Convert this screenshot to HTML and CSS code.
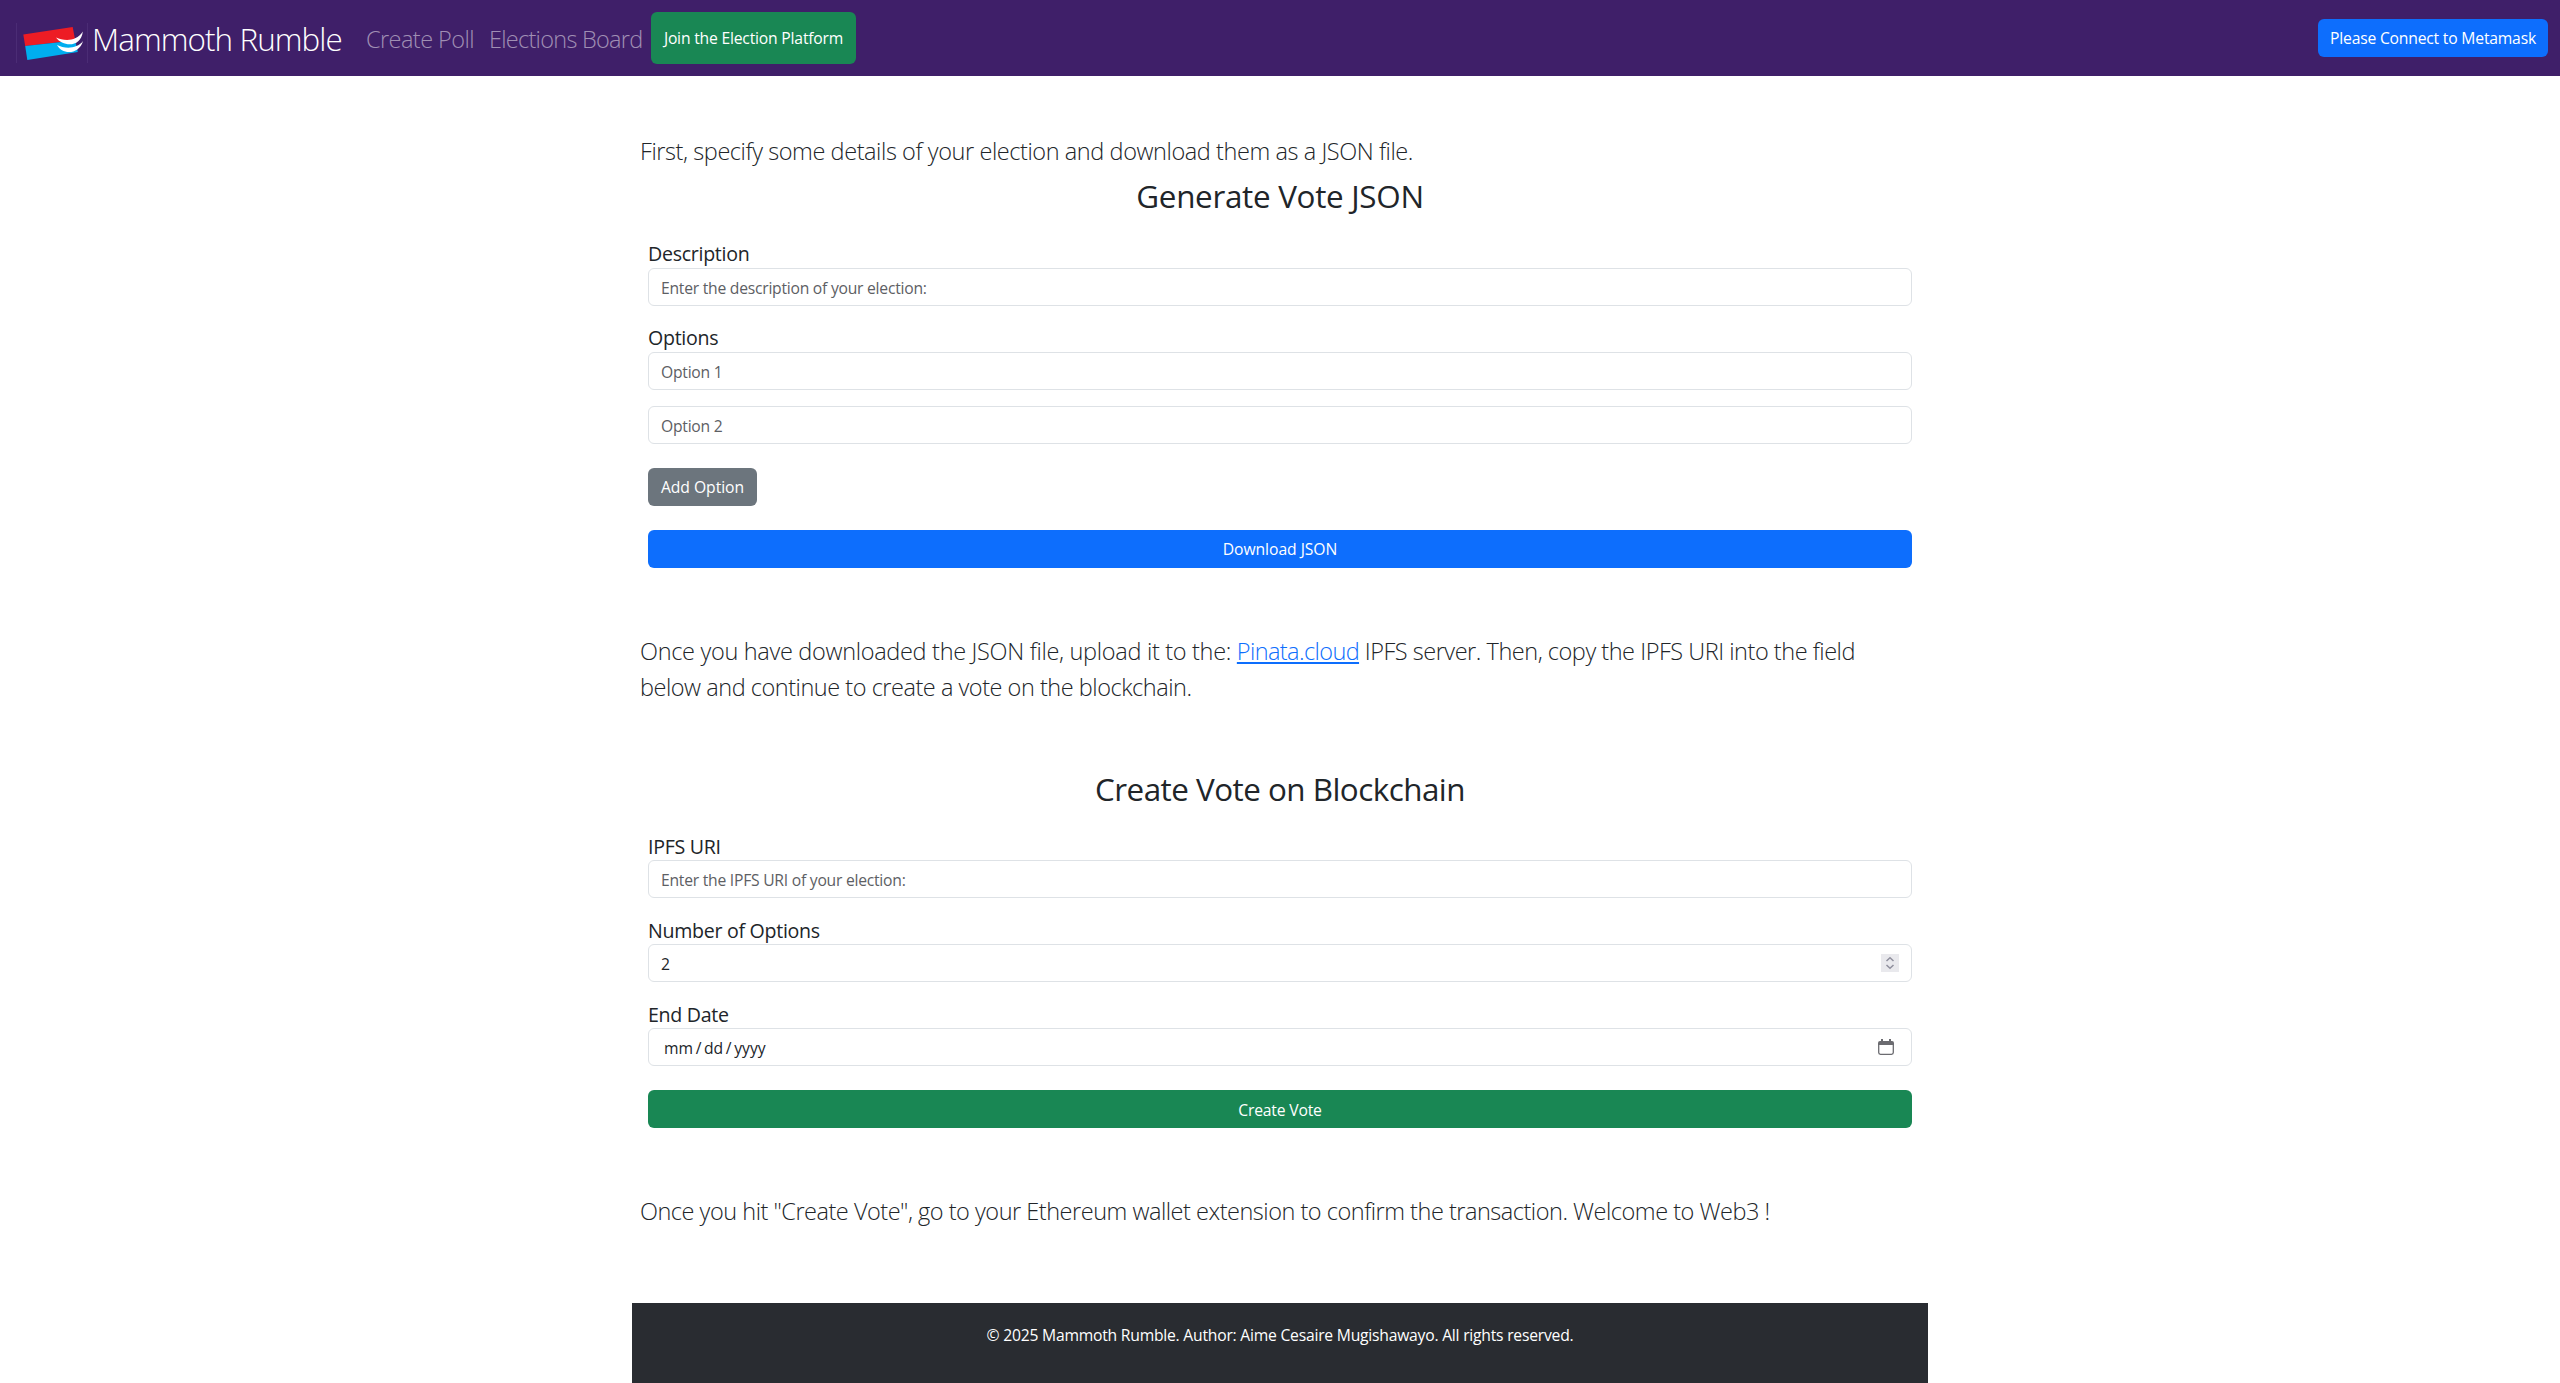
FILE: index.html
```html
<!DOCTYPE html>
<html lang="en">
<head>
<meta charset="utf-8">
<title>Mammoth Rumble</title>
<link rel="stylesheet" href="styles.css">
</head>
<body>
<nav class="navbar">
  <a class="brand"><svg class="logo" width="72" height="40" viewBox="0 0 72 40">
    <path fill="#4b2c75" d="M0 0h1v40H0zM71 0h1v40h-1z"/>
    <path fill="#ed1c24" d="M7.300 11.500 56.700 4 59.200 17.500 9.200 23z"/>
    <path fill="#00aeef" d="M9.200 23 59.200 17.500 61.800 29 11.300 37z"/>
    <path fill="#fff" d="M40 14.500C48 18 60 19 66.800 8.500C65 25 47 24 40 14.500zM41 22C49 26 61 26 67 18C63 32 46 32 41 22z"/>
  </svg><span class="brand-name">Mammoth Rumble</span></a>
  <a class="nav-link poll">Create Poll</a>
  <a class="nav-link board">Elections Board</a>
  <button class="btn join">Join the Election Platform</button>
  <button class="btn connect">Please Connect to Metamask</button>
</nav>
<main class="container">
  <p class="lead intro">First, specify some details of your election and download them as a JSON file.</p>
  <form class="form">
    <h2 class="title generate">Generate Vote JSON</h2>
    <label class="label">Description</label>
    <input class="field" type="text" placeholder="Enter the description of your election:">
    <label class="label next">Options</label>
    <input class="field" type="text" placeholder="Option 1">
    <input class="field extra" type="text" placeholder="Option 2">
    <button class="btn add" type="button">Add Option</button>
    <button class="btn wide download" type="button">Download JSON</button>
  </form>
  <p class="lead upload"><span class="before">Once you have downloaded the JSON file, upload it to the: </span><a class="link">Pinata.cloud</a> IPFS server. Then, copy the IPFS URI into the field<br>below and continue to create a vote on the blockchain.</p>
  <form class="form">
    <h2 class="title create">Create Vote on Blockchain</h2>
    <label class="label low">IPFS URI</label>
    <input class="field" type="text" placeholder="Enter the IPFS URI of your election:">
    <label class="label next low">Number of Options</label>
    <div class="field row"><span>2</span>
      <svg class="spinner" width="18" height="18" viewBox="0 0 18 18"><path fill="#e9e9ed" d="M0 0h18v18H0z"/><path fill="none" stroke="#8f8f9d" stroke-width="1.500" d="M5.500 7 9 3.700 12.500 7M5.500 11 9 14.300 12.500 11"/></svg>
    </div>
    <label class="label next low">End Date</label>
    <div class="field row date"><span>mm&#8201;/&#8201;dd&#8201;/&#8201;yyyy</span>
      <svg class="calendar" width="16" height="16" viewBox="0 0 16 16"><path fill="none" stroke="#6b6b70" stroke-width="1.300" d="M.7 4v9.500q0 1.800 1.800 1.800h11q1.800 0 1.800-1.800V4"/><path fill="#6b6b70" d="M0 6V4q0-2 2-2h1V0h2v2h6V0h2v2h1q2 0 2 2v2z"/></svg>
    </div>
    <button class="btn wide vote" type="button">Create Vote</button>
  </form>
  <p class="lead outro">Once you hit "Create Vote", go to your Ethereum wallet extension to confirm the transaction. Welcome to Web3 !</p>
  <footer class="footer">© 2025 Mammoth Rumble. Author: Aime Cesaire Mugishawayo. All rights reserved.</footer>
</main>
</body>
</html>
```
FILE: styles.css
```css
* { box-sizing: border-box; }
body {
  margin: 0;
  background: #fff;
  color: #212529;
  font: 15.7px/24px "Open Sans", "Noto Sans", sans-serif;
  letter-spacing: -0.22px;
}
.navbar {
  display: flex;
  align-items: center;
  height: 76px;
  padding: 0 12px 0 16px;
  background: #3f1f69;
}
.brand { display: flex; align-items: center; width: 326px; height: 48px; margin-top: 10px; color: #fff; }
.logo { flex: none; }
.brand-name {
  margin: -8px 0 0 4px;
  font-size: 31.4px;
  font-weight: 300;
  line-height: 48px;
  letter-spacing: -0.92px;
  white-space: nowrap;
}
.nav-link {
  padding-top: 2px;
  color: #a08fb4;
  font-size: 23.5px;
  font-weight: 300;
  line-height: 36px;
  white-space: nowrap;
}
.poll { width: 107px; margin-left: 24px; letter-spacing: -0.56px; }
.board { width: 154px; margin-left: 16px; letter-spacing: -0.72px; }
.btn {
  height: 38px;
  padding: 0 12px;
  border: 0;
  border-radius: 6px;
  color: #fff;
  font: inherit;
  letter-spacing: -0.2px;
  white-space: nowrap;
}
.join { width: 205px; height: 52px; margin-left: 8px; background: #198754; }
.connect { width: 230px; margin-left: auto; background: #0d6efd; }
.container { width: 1296px; margin: 0 auto; }
.lead {
  margin: 0;
  padding: 0 8px;
  font-size: 23.5px;
  font-weight: 300;
  line-height: 36px;
  letter-spacing: -0.42px;
  white-space: nowrap;
}
.intro { padding-top: 57px; }
.form { display: flex; flex-direction: column; padding: 0 16px; }
.title { margin: 0; font-size: 31.4px; font-weight: 500; line-height: 38px; text-align: center; }
.generate { padding: 8px 0 23px; letter-spacing: -0.3px; }
.create { padding: 65px 0 22px; letter-spacing: -0.52px; }
.label { height: 30px; font-size: 19.6px; line-height: 32px; letter-spacing: -0.29px; }
.low { line-height: 34px; }
.next { margin-top: 16px; }
.field {
  width: 100%;
  height: 38px;
  padding: 1px 12px 0;
  border: 1px solid #dee2e6;
  border-radius: 6px;
  background: #fff;
  color: #212529;
  font: inherit;
  letter-spacing: -0.25px;
}
.field::placeholder { color: #5d6064; opacity: 1; }
.extra { margin-top: 16px; }
.row { display: flex; align-items: center; justify-content: space-between; padding-top: 2px; }
.spinner, .calendar { margin-top: -2px; }
.date { padding: 2px 17px 0 15px; letter-spacing: 0; }
.add { align-self: flex-start; width: 109px; margin-top: 24px; letter-spacing: -0.05px; background: #6c757d; }
.wide { width: 100%; margin-top: 24px; }
.download { letter-spacing: -0.05px; background: #0d6efd; }
.vote { padding-top: 1px; background: #198754; }
.upload { padding-top: 65px; letter-spacing: -0.47px; }
.before { letter-spacing: -0.31px; }
.link { color: #0d6efd; letter-spacing: -0.6px; text-decoration: underline; }
.outro { padding-top: 65px; letter-spacing: -0.48px; }
.footer {
  height: 80px;
  margin-top: 74px;
  padding-top: 20px;
  background: #292c31;
  color: #fff;
  letter-spacing: -0.23px;
  text-align: center;
}
```
